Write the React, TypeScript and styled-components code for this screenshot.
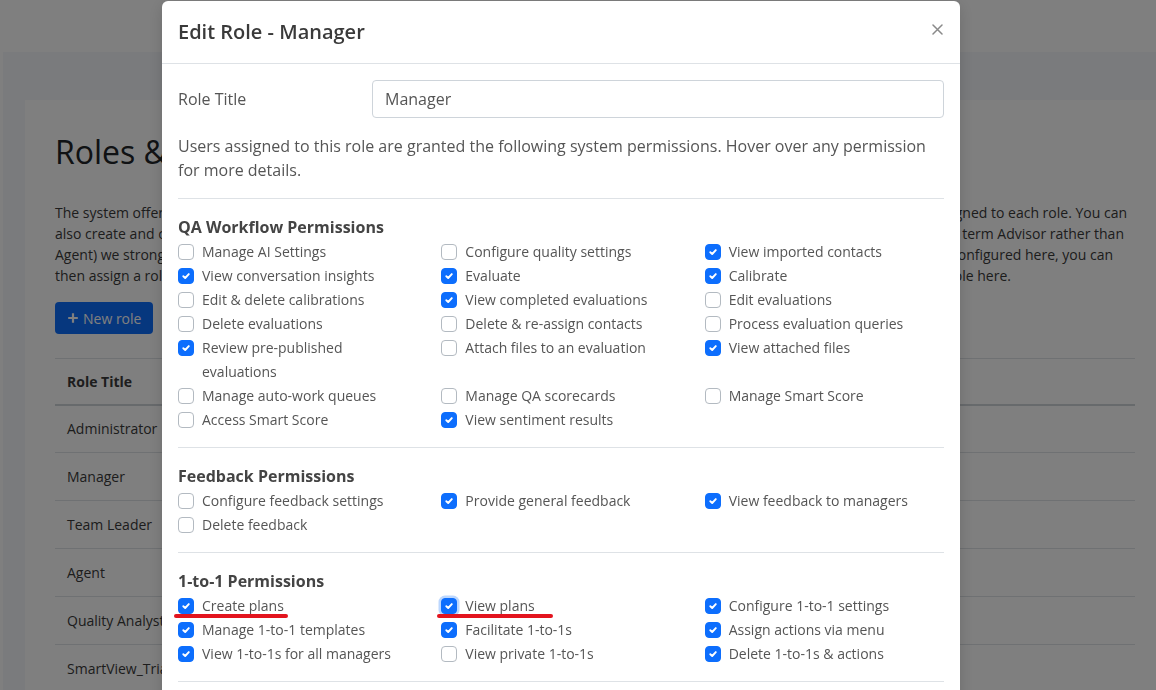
import styled, { createGlobalStyle } from "styled-components";

const GlobalStyle = createGlobalStyle`
  * { box-sizing: border-box; }
  html, body { margin: 0; padding: 0; }
  body {
    font-family: "Open Sans", "Noto Sans", Arial, sans-serif;
    background: #f4f6fa;
    color: #333;
    overflow: hidden;
  }
`;

interface Permission {
  label: string;
  checked?: boolean;
  focused?: boolean;
  mark?: number;
}

interface Section {
  title: string;
  items: Permission[];
}

const sections: Section[] = [
  {
    title: "QA Workflow Permissions",
    items: [
      { label: "Manage AI Settings" },
      { label: "Configure quality settings" },
      { label: "View imported contacts", checked: true },
      { label: "View conversation insights", checked: true },
      { label: "Evaluate", checked: true },
      { label: "Calibrate", checked: true },
      { label: "Edit & delete calibrations" },
      { label: "View completed evaluations", checked: true },
      { label: "Edit evaluations" },
      { label: "Delete evaluations" },
      { label: "Delete & re-assign contacts" },
      { label: "Process evaluation queries" },
      { label: "Review pre-published evaluations", checked: true },
      { label: "Attach files to an evaluation" },
      { label: "View attached files", checked: true },
      { label: "Manage auto-work queues" },
      { label: "Manage QA scorecards" },
      { label: "Manage Smart Score" },
      { label: "Access Smart Score" },
      { label: "View sentiment results", checked: true },
    ],
  },
  {
    title: "Feedback Permissions",
    items: [
      { label: "Configure feedback settings" },
      { label: "Provide general feedback", checked: true },
      { label: "View feedback to managers", checked: true },
      { label: "Delete feedback" },
    ],
  },
  {
    title: "1-to-1 Permissions",
    items: [
      { label: "Create plans", checked: true, mark: 114 },
      { label: "View plans", checked: true, focused: true, mark: 116 },
      { label: "Configure 1-to-1 settings", checked: true },
      { label: "Manage 1-to-1 templates", checked: true },
      { label: "Facilitate 1-to-1s", checked: true },
      { label: "Assign actions via menu", checked: true },
      { label: "View 1-to-1s for all managers", checked: true },
      { label: "View private 1-to-1s" },
      { label: "Delete 1-to-1s & actions", checked: true },
    ],
  },
  {
    title: "Reporting Permissions",
    items: [
      { label: "View reports", checked: true },
      { label: "Export reports" },
      { label: "Schedule reports" },
    ],
  },
];

const roles = [
  "Administrator",
  "Manager",
  "Team Leader",
  "Agent",
  "Quality Analyst",
  "SmartView_Trial",
];

/* ---------- background page ---------- */

const Page = styled.div`
  min-height: 100vh;
  border-left: 3px solid #ffffff;
  display: flex;
  flex-direction: column;
`;

const TopBar = styled.header`
  height: 52px;
  background: #ffffff;
  flex-shrink: 0;
`;

const Main = styled.main`
  padding: 48px 0 0 22px;
`;

const Card = styled.section`
  background: #ffffff;
  padding: 32px 21px 0 30px;
  min-height: 640px;
`;

const PageTitle = styled.h1`
  margin: 0 0 30px;
  font-size: 32px;
  line-height: 40px;
  font-weight: 500;
  color: #212529;
`;

const Intro = styled.div`
  font-size: 14px;
  line-height: 21px;
  color: #3a3a3a;
  margin-bottom: 16px;
`;

const IntroLine = styled.div<{ $trail: number }>`
  display: flex;
  justify-content: space-between;
  white-space: nowrap;
  padding-right: ${(p) => p.$trail}px;
`;

const PrimaryButton = styled.button`
  display: inline-flex;
  align-items: center;
  gap: 4px;
  height: 32px;
  padding: 0 12px;
  border: none;
  border-radius: 4px;
  background: #0d6efd;
  color: #ffffff;
  font-family: inherit;
  font-size: 14px;
`;

const Table = styled.table`
  width: 100%;
  margin-top: 24px;
  border-collapse: collapse;
  font-size: 14px;
  color: #3a3a3a;
`;

const HeadCell = styled.th`
  text-align: left;
  height: 46px;
  padding: 0 12px;
  font-weight: 700;
  border-top: 1px solid #dee2e6;
  border-bottom: 2px solid #cfd4d9;
`;

const Cell = styled.td`
  height: 48px;
  padding: 0 12px;
  border-bottom: 1px solid #dee2e6;
`;

/* ---------- modal ---------- */

const Backdrop = styled.div`
  position: fixed;
  inset: 0;
  background: rgba(0, 0, 0, 0.5);
  padding: 1px 0 0 162px;
  overflow: hidden;
`;

const Dialog = styled.div`
  width: 798px;
  background: #ffffff;
  border-radius: 6px;
  box-shadow: 0 4px 16px rgba(0, 0, 0, 0.15);
`;

const DialogHeader = styled.div`
  display: flex;
  align-items: center;
  justify-content: space-between;
  padding: 16px 15px 16px 16px;
  border-bottom: 1px solid #dee2e6;
`;

const DialogTitle = styled.h2`
  margin: 0;
  font-size: 20px;
  line-height: 30px;
  font-weight: 600;
  color: #3a3a3a;
`;

const CloseButton = styled.button`
  display: flex;
  align-items: center;
  justify-content: center;
  width: 16px;
  height: 16px;
  margin-top: -6px;
  padding: 0;
  border: none;
  background: none;
  color: #8a8a8a;
`;

const DialogBody = styled.div`
  padding: 16px 16px 40px;
`;

const TitleRow = styled.div`
  display: grid;
  grid-template-columns: 194px 1fr;
  align-items: center;
`;

const FieldLabel = styled.label`
  font-size: 16px;
  color: #555;
`;

const TextInput = styled.input`
  height: 38px;
  padding: 6px 12px;
  border: 1px solid #ced4da;
  border-radius: 4px;
  font-family: inherit;
  font-size: 16px;
  color: #555;
  outline: none;
`;

const Description = styled.p`
  margin: 16px 0 0;
  padding-bottom: 16px;
  font-size: 16px;
  line-height: 24px;
  color: #555;
  border-bottom: 1px solid #dee2e6;
`;

const Group = styled.div`
  padding: 16px 0 15px;
  border-bottom: 1px solid #dee2e6;
`;

const GroupTitle = styled.h3`
  margin: 0 0 1px;
  font-size: 16px;
  line-height: 24px;
  font-weight: 700;
  color: #444;
`;

const PermGrid = styled.div`
  display: grid;
  grid-template-columns: repeat(3, 1fr);
  column-gap: 24px;
`;

const PermItem = styled.label<{ $mark?: number }>`
  position: relative;
  display: flex;
  align-items: flex-start;
  gap: 8px;
  font-size: 14px;
  line-height: 24px;
  color: #555;

  ${(p) =>
    p.$mark
      ? `
    &::after {
      content: "";
      position: absolute;
      left: -4px;
      top: 20px;
      width: ${p.$mark}px;
      height: 3.5px;
      border-radius: 2px;
      background: #e3141e;
    }
  `
      : ""}
`;

const Box = styled.span<{ $checked?: boolean; $focused?: boolean }>`
  flex-shrink: 0;
  display: flex;
  align-items: center;
  justify-content: center;
  width: 16px;
  height: 16px;
  margin-top: 4px;
  border-radius: 4px;
  border: 1px solid ${(p) => (p.$checked ? "#0d6efd" : "#b3bac1")};
  background: ${(p) => (p.$checked ? "#0d6efd" : "#ffffff")};
  box-shadow: ${(p) =>
    p.$focused ? "0 0 0 2.5px rgba(13, 110, 253, 0.28)" : "none"};
`;

function CheckMark() {
  return (
    <svg width="10" height="10" viewBox="0 0 10 10" fill="none">
      <path
        d="M2.3 5.2 L4.2 7 L7.8 3.1"
        stroke="#ffffff"
        strokeWidth="1.9"
        strokeLinecap="round"
        strokeLinejoin="round"
      />
    </svg>
  );
}

function PermissionCheck({ item }: { item: Permission }) {
  return (
    <PermItem $mark={item.mark}>
      <Box $checked={item.checked} $focused={item.focused}>
        {item.checked && <CheckMark />}
      </Box>
      <span>{item.label}</span>
    </PermItem>
  );
}

export default function App() {
  return (
    <>
      <GlobalStyle />
      <Page>
        <TopBar />
        <Main>
          <Card>
            <PageTitle>Roles &amp; Permissions</PageTitle>
            <Intro>
              <IntroLine $trail={8}>
                <span>The system offers a number of default roles</span>
                <span>with permissions that are assigned to each role. You can</span>
              </IntroLine>
              <IntroLine $trail={11}>
                <span>also create and configure custom roles.</span>
                <span>If you want to use the term Advisor rather than</span>
              </IntroLine>
              <IntroLine $trail={22}>
                <span>Agent) we strongly recommend renaming</span>
                <span>the role. Once roles are configured here, you can</span>
              </IntroLine>
              <IntroLine $trail={124}>
                <span>then assign a role to each user</span>
                <span>from the users page or edit a role here.</span>
              </IntroLine>
            </Intro>
            <PrimaryButton>
              <svg width="12" height="12" viewBox="0 0 12 12">
                <path
                  d="M6 1.2v9.6M1.2 6h9.6"
                  stroke="currentColor"
                  strokeWidth="2.2"
                />
              </svg>
              New role
            </PrimaryButton>
            <Table>
              <thead>
                <tr>
                  <HeadCell>Role Title</HeadCell>
                </tr>
              </thead>
              <tbody>
                {roles.map((r) => (
                  <tr key={r}>
                    <Cell>{r}</Cell>
                  </tr>
                ))}
              </tbody>
            </Table>
          </Card>
        </Main>
      </Page>

      <Backdrop>
        <Dialog>
          <DialogHeader>
            <DialogTitle>Edit Role - Manager</DialogTitle>
            <CloseButton aria-label="Close">
              <svg width="11" height="11" viewBox="0 0 11 11">
                <path
                  d="M1 1l9 9M10 1l-9 9"
                  stroke="currentColor"
                  strokeWidth="1.5"
                  strokeLinecap="round"
                />
              </svg>
            </CloseButton>
          </DialogHeader>
          <DialogBody>
            <TitleRow>
              <FieldLabel>Role Title</FieldLabel>
              <TextInput defaultValue="Manager" />
            </TitleRow>
            <Description>
              Users assigned to this role are granted the following system
              permissions. Hover over any permission for more details.
            </Description>
            {sections.map((s) => (
              <Group key={s.title}>
                <GroupTitle>{s.title}</GroupTitle>
                <PermGrid>
                  {s.items.map((item) => (
                    <PermissionCheck key={item.label} item={item} />
                  ))}
                </PermGrid>
              </Group>
            ))}
          </DialogBody>
        </Dialog>
      </Backdrop>
    </>
  );
}
